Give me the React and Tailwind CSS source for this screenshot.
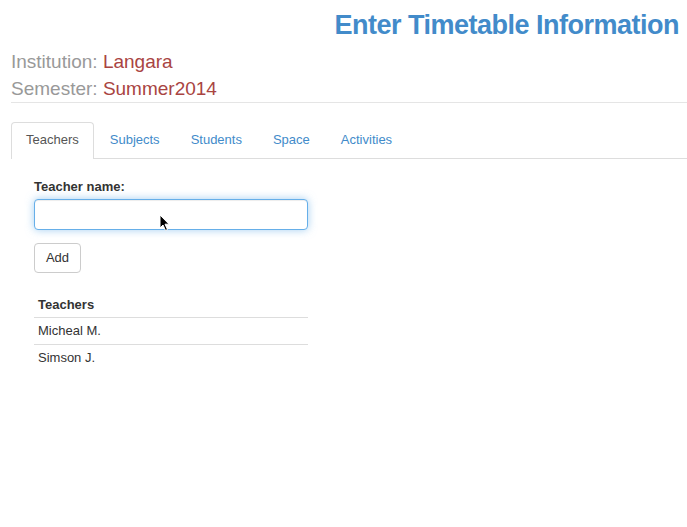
import React from "react";

const tabs = ["Teachers", "Subjects", "Students", "Space", "Activities"];

export default function App() {
  return (
    <div
      className="relative w-full h-[527px] bg-white text-[#333] overflow-hidden"
      style={{ fontFamily: '"Liberation Sans", Arial, sans-serif' }}
    >
      <div className="pl-[11px]">
        <h2 className="mt-[9px] pr-[8px] text-right text-[27px] leading-[32px] font-bold tracking-[-0.5px] text-[#428bca]">
          Enter Timetable Information
        </h2>
        <div className="mt-[7px] border-b border-[#e5e5e5] text-[19px] leading-[27px]">
          <div>
            <span className="text-[#999]">Institution: </span>
            <span className="text-[#a94442]">Langara</span>
          </div>
          <div>
            <span className="text-[#999]">Semester: </span>
            <span className="text-[#a94442]">Summer2014</span>
          </div>
        </div>

        <div className="mt-[19px] flex border-b border-[#ddd] text-[13px] leading-[18px]">
          {tabs.map((t, i) => (
            <div
              key={t}
              className={
                i === 0
                  ? "mr-[1px] -mb-px border border-b-0 border-[#ddd] rounded-t-[4px] bg-white px-[14px] pt-[8px] pb-[10px] text-[#555]"
                  : "mr-[1px] border border-b-0 border-transparent px-[14px] pt-[8px] pb-[9px] text-[#428bca]"
              }
            >
              {t}
            </div>
          ))}
        </div>
      </div>

      <div className="pl-[34px] pt-[19px] text-[13px] leading-[18px]">
        <div className="mb-[3px] font-bold">Teacher name:</div>
        <div className="relative w-[274px] h-[31px] rounded-[4px] border border-[#66afe9] bg-white shadow-[inset_0_1px_1px_rgba(0,0,0,0.075),0_0_8px_rgba(102,175,233,0.6)]">
          <svg
            className="absolute left-[124px] top-[14px]"
            width="12"
            height="18"
            viewBox="0 0 12 18"
          >
            <path
              d="M1 1 L1 14 L4 11 L6.5 16.5 L8.5 15.5 L6 10.2 L10 10.2 Z"
              fill="#000"
              stroke="#fff"
              strokeWidth="1"
              strokeLinejoin="round"
            />
          </svg>
        </div>
        <button className="mt-[13px] block w-[47px] h-[30px] rounded-[4px] border border-[#ccc] bg-white text-[13px] leading-[18px] text-[#333]">
          Add
        </button>

        <div className="mt-[19px] w-[274px]">
          <div className="pl-[4px] pt-[4px] pb-[3px] font-bold">Teachers</div>
          <div className="border-t border-[#ddd] pl-[4px] py-[4px]">Micheal M.</div>
          <div className="border-t border-[#ddd] pl-[4px] py-[4px]">Simson J.</div>
        </div>
      </div>
    </div>
  );
}
